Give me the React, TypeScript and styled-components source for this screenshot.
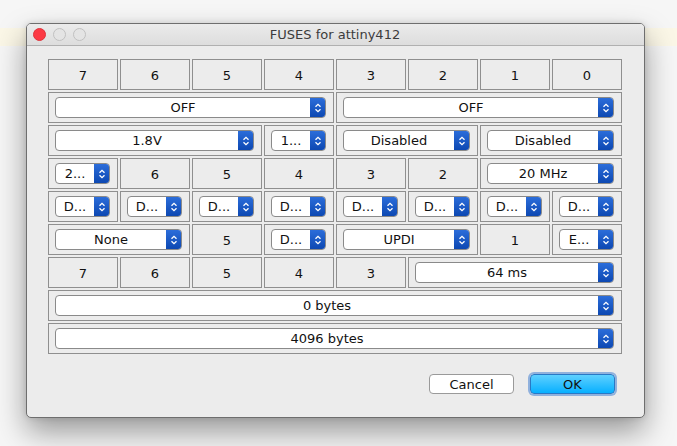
import styled, { createGlobalStyle } from 'styled-components';

type CellDef = { span?: number; label?: string; select?: string };

const rows: CellDef[][] = [
  [{ label: '7' }, { label: '6' }, { label: '5' }, { label: '4' }, { label: '3' }, { label: '2' }, { label: '1' }, { label: '0' }],
  [{ span: 4, select: 'OFF' }, { span: 4, select: 'OFF' }],
  [{ span: 3, select: '1.8V' }, { select: '1...' }, { span: 2, select: 'Disabled' }, { span: 2, select: 'Disabled' }],
  [{ select: '2...' }, { label: '6' }, { label: '5' }, { label: '4' }, { label: '3' }, { label: '2' }, { span: 2, select: '20 MHz' }],
  Array.from({ length: 8 }, () => ({ select: 'D...' })),
  [{ span: 2, select: 'None' }, { label: '5' }, { select: 'D...' }, { span: 2, select: 'UPDI' }, { label: '1' }, { select: 'E...' }],
  [{ label: '7' }, { label: '6' }, { label: '5' }, { label: '4' }, { label: '3' }, { span: 3, select: '64 ms' }],
  [{ span: 8, select: '0 bytes' }],
  [{ span: 8, select: '4096 bytes' }],
];

const Chevrons = () => (
  <svg width="8" height="12" viewBox="0 0 8 12">
    <path d="M1.5 4.8 L4 2.3 L6.5 4.8 M1.5 7.2 L4 9.7 L6.5 7.2" fill="none" stroke="#fff" strokeWidth="1.3" />
  </svg>
);

const App = () => {
  return (
    <>
      <GlobalStyle />
      <Page>
        <Window>
          <TitleBar>
            <Lights>
              <Light $red />
              <Light />
              <Light />
            </Lights>
            <Title>FUSES for attiny412</Title>
            <span />
          </TitleBar>
          <Body>
            <FuseGrid>
              {rows.map((row, r) =>
                row.map((cell, c) => (
                  <Cell key={`${r}-${c}`} $span={cell.span ?? 1} $select={!!cell.select}>
                    {cell.select ? (
                      <Popup>
                        <PopupText>{cell.select}</PopupText>
                        <PopupArrow>
                          <Chevrons />
                        </PopupArrow>
                      </Popup>
                    ) : (
                      cell.label
                    )}
                  </Cell>
                ))
              )}
            </FuseGrid>
            <Buttons>
              <Button>Cancel</Button>
              <Button $primary>OK</Button>
            </Buttons>
          </Body>
        </Window>
      </Page>
    </>
  );
};

const GlobalStyle = createGlobalStyle`
  html, body {
    margin: 0;
    padding: 0;
  }
  body {
    font-family: "DejaVu Sans", "Liberation Sans", sans-serif;
  }
`;

const Page = styled.div`
  width: 677px;
  height: 446px;
  overflow: hidden;
  padding: 23px 0 0 26px;
  box-sizing: border-box;
  background: linear-gradient(
    to bottom,
    #f6f6f6 28px,
    #fbf7e7 28px,
    #fbf7e7 46px,
    #f6f6f6 46px
  );
`;

const Window = styled.div`
  width: 619px;
  height: 395px;
  box-sizing: border-box;
  border: 1px solid #6e6e6e;
  border-radius: 5px;
  background: #ececec;
  overflow: hidden;
  box-shadow: 0 14px 30px rgba(0, 0, 0, 0.38), 0 0 6px rgba(0, 0, 0, 0.12);
  display: flex;
  flex-direction: column;
`;

const TitleBar = styled.div`
  height: 21px;
  flex-shrink: 0;
  display: grid;
  grid-template-columns: 1fr auto 1fr;
  align-items: center;
  padding: 0 7px 0 6px;
  background: linear-gradient(to bottom, #ebebeb, #dddddd);
  border-bottom: 1px solid #b0b0b0;
`;

const Lights = styled.div`
  display: flex;
  gap: 7px;
  align-items: center;
`;

const Light = styled.span<{ $red?: boolean }>`
  width: 13px;
  height: 13px;
  border-radius: 50%;
  box-sizing: border-box;
  background: ${(p) => (p.$red ? '#fc3a44' : '#e4e4e4')};
  border: 1px solid ${(p) => (p.$red ? '#de343c' : '#c0c0c0')};
`;

const Title = styled.div`
  font-size: 13px;
  color: #3c3c3c;
`;

const Body = styled.div`
  flex: 1;
  display: flex;
  flex-direction: column;
  padding: 13px 0 0 21px;
`;

const FuseGrid = styled.div`
  display: grid;
  grid-template-columns: repeat(8, 70px);
  grid-auto-rows: 31px;
  gap: 2px;
`;

const Cell = styled.div<{ $span: number; $select: boolean }>`
  grid-column: span ${(p) => p.$span};
  box-sizing: border-box;
  border: 1px solid #8f8f8f;
  background: #ececec;
  display: flex;
  align-items: ${(p) => (p.$select ? 'flex-start' : 'center')};
  justify-content: center;
  padding: ${(p) => (p.$select ? '4px 7px 0 6px' : '2px 0 0')};
  font-size: 13px;
  color: #111;
`;

const Popup = styled.div`
  flex: 1;
  height: 21px;
  box-sizing: border-box;
  display: flex;
  border: 1px solid #8a8a8a;
  border-radius: 4px;
  background: #fff;
  overflow: hidden;
`;

const PopupText = styled.div`
  flex: 1;
  min-width: 0;
  display: flex;
  align-items: center;
  justify-content: center;
  font-size: 13px;
  color: #111;
  white-space: nowrap;
  overflow: hidden;
`;

const PopupArrow = styled.div`
  width: 16px;
  margin: -1px -1px -1px 0;
  display: flex;
  align-items: center;
  justify-content: center;
  background: linear-gradient(to bottom, #2d6fdc, #0b46b0);
  border-radius: 0 4px 4px 0;
`;

const Buttons = styled.div`
  display: flex;
  justify-content: flex-end;
  gap: 16px;
  margin-top: 20px;
  padding-right: 29px;
`;

const Button = styled.button<{ $primary?: boolean }>`
  width: 85px;
  height: 20px;
  box-sizing: border-box;
  border-radius: 4px;
  font-family: "DejaVu Sans", "Liberation Sans", sans-serif;
  font-size: 13px;
  color: #111;
  padding: 0;
  border: 1px solid ${(p) => (p.$primary ? '#2a78c4' : '#9a9a9a')};
  background: ${(p) =>
    p.$primary ? 'linear-gradient(to bottom, #5fd0ff, #07b0ff)' : '#ffffff'};
  box-shadow: ${(p) => (p.$primary ? '0 0 0 2px rgba(70, 130, 210, 0.55)' : 'none')};
`;

export default App;
